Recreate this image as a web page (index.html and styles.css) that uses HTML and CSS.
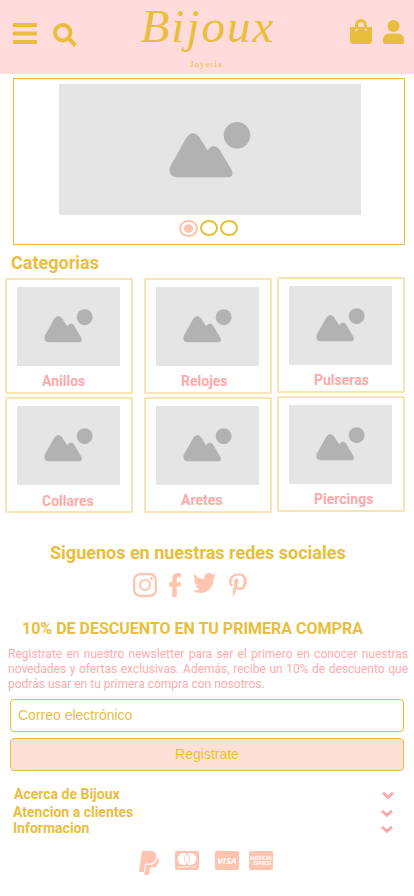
FILE: index.html
```html
<!DOCTYPE html>
<html lang="es">
<head>
<meta charset="utf-8">
<meta name="viewport" content="width=device-width, initial-scale=1">
<title>Bijoux Joyería</title>
<link rel="stylesheet" href="styles.css">
</head>
<body>
<svg width="0" height="0" class="defs">
  <symbol id="picture" viewBox="0 0 82 56">
    <path d="M17.500 15.500Q24 7 30.500 15.500L38.700 28.500Q44.500 20 50.500 27.500L62.700 48Q65.500 55.300 58 55.300H7.500Q-1.500 54 1.200 44.500Z"/>
    <circle cx="68" cy="13.300" r="13.300"/>
  </symbol>
  <symbol id="chevron" viewBox="0 0 14 9"><path d="M2 1.800l5 4.600L12 1.800" fill="none" stroke="#ffa6a6" stroke-width="2.800"/></symbol>
</svg>

<header class="top">
  <svg class="menu" viewBox="0 0 24 22"><path d="M0 0h24v4H0zM0 8.500h24v4H0zM0 17h24v4H0z"/></svg>
  <svg class="search" viewBox="0 0 24 24"><circle cx="9.700" cy="9.700" r="7.700"/><path d="M15.500 15.500l7 7"/></svg>
  <div class="brand"><span class="name">Bijoux</span><span class="sub">Joyería.</span></div>
  <svg class="bag" viewBox="0 0 22 25"><path fill-rule="evenodd" d="M0 8h5V6a6 6 0 0 1 12 0v2h5v13.500a3.500 3.500 0 0 1-3.500 3.500h-15A3.500 3.500 0 0 1 0 21.500zM8 8h6V6.300a3 3 0 0 0-6 0zM6.500 9.700a1.200 1.200 0 1 0 .01 0zM15.800 9.700a1.200 1.200 0 1 0 .01 0z"/></svg>
  <svg class="user" viewBox="0 0 21 24"><circle cx="10.500" cy="6" r="6"/><path d="M6 13.500h9a6 6 0 0 1 6 6V22a2 2 0 0 1-2 2H2a2 2 0 0 1-2-2v-2.500a6 6 0 0 1 6-6z"/></svg>
</header>

<main>
  <section class="hero">
    <div class="slide"><svg><use href="#picture"/></svg></div>
    <div class="dots"><span class="dot on"></span><span class="dot"></span><span class="dot"></span></div>
  </section>

  <h2 class="heading">Categorias</h2>
  <section class="categories">
    <div class="column">
      <article class="card"><div class="thumb"><svg><use href="#picture"/></svg></div><h3>Anillos</h3></article>
      <article class="card"><div class="thumb"><svg><use href="#picture"/></svg></div><h3 class="low">Collares</h3></article>
    </div>
    <div class="column">
      <article class="card"><div class="thumb"><svg><use href="#picture"/></svg></div><h3>Relojes</h3></article>
      <article class="card"><div class="thumb"><svg><use href="#picture"/></svg></div><h3>Aretes</h3></article>
    </div>
    <div class="column last">
      <article class="card"><div class="thumb"><svg><use href="#picture"/></svg></div><h3>Pulseras</h3></article>
      <article class="card"><div class="thumb"><svg><use href="#picture"/></svg></div><h3>Piercings</h3></article>
    </div>
  </section>

  <section class="follow">
    <h2>Siguenos en nuestras redes sociales</h2>
    <div class="social">
      <svg class="ig" viewBox="0 0 24 24"><rect x="1.100" y="1.100" width="21.800" height="21.800" rx="6"/><circle cx="12" cy="12" r="5"/><circle class="solid" cx="18.400" cy="5.600" r="1.500"/></svg>
      <svg class="fb" viewBox="0 0 12 24"><path d="M12 .1v4H9.800C8 4.100 7.800 5 7.800 6.300V9.300H12l-.5 4.300H7.800V24H3.200V13.600H0V9.300h3.200V6C3.200 2 5.500 0 9 0z"/></svg>
      <svg class="tw" viewBox="1.54 4 20.92 17" preserveAspectRatio="none"><path d="M22.460 6c-.77.35-1.600.58-2.460.69.88-.53 1.560-1.370 1.880-2.380-.83.5-1.750.85-2.720 1.050C18.370 4.500 17.260 4 16 4c-2.350 0-4.270 1.920-4.270 4.290 0 .34.040.67.110.98C8.280 9.090 5.110 7.380 3 4.790c-.37.63-.58 1.370-.58 2.150 0 1.490.75 2.810 1.910 3.560-.71 0-1.370-.2-1.950-.5v.03c0 2.080 1.480 3.820 3.440 4.210a4.220 4.220 0 0 1-1.930.07 4.280 4.280 0 0 0 4 2.980 8.520 8.520 0 0 1-5.330 1.840c-.34 0-.68-.02-1.020-.06C3.440 20.290 5.700 21 8.120 21 16 21 20.330 14.460 20.330 8.790c0-.19 0-.37-.01-.56.84-.6 1.560-1.360 2.140-2.230z"/></svg>
      <svg class="pin" viewBox="0 0 384 512" preserveAspectRatio="none"><path d="M204 6.500C101.400 6.500 0 74.900 0 185.600 0 256 39.600 296 63.600 296c9.900 0 15.600-27.600 15.600-35.400 0-9.300-23.700-29.100-23.700-67.800 0-80.400 61.200-137.400 140.400-137.400 68.100 0 118.500 38.700 118.500 109.800 0 53.100-21.300 152.700-90.300 152.700-24.900 0-46.200-18-46.200-43.800 0-37.800 26.400-74.400 26.400-113.400 0-66.200-93.900-54.200-93.900 25.800 0 16.800 2.100 35.400 9.600 50.700-13.800 59.400-42 147.900-42 209.100 0 18.900 2.700 37.500 4.500 56.400 3.400 3.800 1.700 3.400 6.900 1.500 50.400-69 48.600-82.500 71.400-172.800 12.300 23.400 44.100 36 69.300 36 106.200 0 153.900-103.500 153.900-196.800C384 71.300 298.200 6.500 204 6.500z"/></svg>
    </div>
  </section>

  <section class="newsletter">
    <h2>10% DE DESCUENTO EN TU PRIMERA COMPRA</h2>
    <p>Registrate en nuestro newsletter para ser el primero en conocer nuestras novedades y ofertas exclusivas. Además, recibe un 10% de descuento que podrás usar en tu primera compra con nosotros.</p>
    <form>
      <input type="email" placeholder="Correo electrónico">
      <button type="button">Registrate</button>
    </form>
  </section>
</main>

<footer>
  <ul class="links">
    <li class="first"><span>Acerca de Bijoux</span><svg><use href="#chevron"/></svg></li>
    <li class="second"><span>Atencion a clientes</span><svg><use href="#chevron"/></svg></li>
    <li><span>Informacion</span><svg><use href="#chevron"/></svg></li>
  </ul>
  <div class="payments">
    <svg class="paypal" viewBox="0 0 20 24"><path d="M3.400 0h8.200c3.800 0 6.200 2 5.600 5.900-.8 4.600-3.700 6.700-7.800 6.700H7.300c-1 0-1.300.5-1.500 1.300L4.700 21H0L3 .5z"/><path d="M18.400 6.200c1.200 1 1.800 2.600 1.400 4.600-.8 4-3.300 5.800-6.900 5.800h-1.100c-.7 0-.9.500-1 1.100l-1 5.600-.3.700H5.300l1.500-9.200c.1-.7.500-1 1.200-1h2.100c4.600 0 7.600-2.500 8.300-7.600z"/></svg>
    <svg class="pay mc" viewBox="0 0 24 19"><rect width="24" height="19" rx="2"/><circle cx="8.700" cy="8" r="6" fill="#fff"/><circle cx="15.300" cy="8" r="6" fill="#fff"/><path d="M12 3a6 6 0 0 1 0 10a6 6 0 0 1 0-10z" fill="#fff" stroke="#ffc4af" stroke-width=".9"/><text x="3" y="17.200" textLength="18" font-size="3.500">mastercard</text></svg>
    <svg class="pay visa" viewBox="0 0 24 19"><rect width="24" height="19" rx="2"/><text x="2.300" y="12.800" textLength="19.500" lengthAdjust="spacingAndGlyphs" font-size="9.500" font-weight="700" font-style="italic">VISA</text></svg>
    <svg class="pay amex" viewBox="0 0 24 19"><rect width="24" height="19" rx="2"/><text x="1" y="8.500" textLength="21.500" lengthAdjust="spacingAndGlyphs" font-size="4.800" font-weight="700">AMERICAN</text><text x="4.500" y="14" textLength="18" lengthAdjust="spacingAndGlyphs" font-size="4.800" font-weight="700">EXPRESS</text></svg>
  </div>
</footer>
</body>
</html>
```
FILE: styles.css
```css
* { box-sizing: border-box; margin: 0; padding: 0; }
body { width: 414px; height: 896px; overflow: hidden; background: #fff; font-family: Roboto, sans-serif; color: #e9be3d; }
svg { display: block; flex: none; }
.defs { position: absolute; }

.top { display: flex; align-items: flex-start; height: 74px; padding-left: 13px; background: #ffdcdb; fill: #e9be3f; }
.menu { width: 24px; height: 22px; margin-top: 23px; }
.search { width: 24px; height: 24px; margin: 23px 0 0 16px; fill: none; stroke: #e9be3f; stroke-width: 4; }
.brand { display: flex; flex-direction: column; align-items: center; width: 136px; margin-left: 63px; }
.name { height: 59px; font: italic 47px/53px "Liberation Serif", serif; letter-spacing: 2px; white-space: nowrap; }
.sub { font: 9px/11px "Liberation Serif", serif; letter-spacing: 1px; }
.bag { width: 22px; height: 25px; margin: 19px 0 0 74px; }
.user { width: 21px; height: 24px; margin: 20px 0 0 11px; }

.hero { width: 392px; height: 167px; margin: 4px 0 0 13px; padding: 5px 0 0 45px; border: 1px solid #e9be3d; }
.slide { width: 302px; height: 131px; padding: 38px 0 0 110px; background: #e5e5e5; }
.slide svg { width: 82px; height: 56px; fill: #b2b2b2; }
.dots { display: flex; gap: 2px; padding: 5px 0 0 120px; }
.dot { width: 18px; height: 16px; border: 2px solid #e9be3d; border-radius: 50%; }
.dot.on { width: 19px; height: 17px; border-color: #ffc4af; background: radial-gradient(ellipse 5px 4.500px, #ffc4af 88%, #fff 100%); }

.heading { margin: 8px 0 0 11px; font-size: 18px; line-height: 20px; font-weight: 700; }
.categories { display: flex; margin: 5px 0 0 5px; }
.column { display: flex; flex-direction: column; gap: 3px; width: 128px; margin-right: 11px; }
.column.last { margin: -1px 0 0 -6px; }
.card { height: 116px; padding: 7px 0 0 10px; border: 2px solid #f6e5b1; border-radius: 2px; }
.thumb { width: 103px; height: 79px; padding: 22px 0 0 27px; background: #e5e5e5; }
.thumb svg { width: 49px; height: 34px; fill: #b2b2b2; }
.card h3 { margin: 7px 0 0 25px; font-size: 14px; line-height: 16px; font-weight: 700; color: #ffa8a9; }
.card h3.low { margin-top: 8px; }

.follow { padding: 30px 0 0 50px; }
.follow h2 { font-size: 18px; line-height: 20px; font-weight: 700; white-space: nowrap; }
.social { display: flex; align-items: flex-start; padding: 10px 0 0 83px; fill: #ffc4af; }
.ig { width: 24px; height: 24px; fill: none; stroke: #ffc4af; stroke-width: 2.200; }
.ig .solid { fill: #ffc4af; stroke: none; }
.fb { width: 12px; height: 24px; margin-left: 12px; }
.tw { width: 23px; height: 20px; margin-left: 12px; }
.pin { width: 18px; height: 24px; margin-left: 13px; }

.newsletter { padding: 22px 6px 0 8px; }
.newsletter h2 { margin-left: 14px; font-size: 16px; line-height: 20px; font-weight: 700; white-space: nowrap; }
.newsletter p { margin-top: 8px; font-size: 12px; line-height: 15px; text-align: justify; color: #ffabac; }
form { display: flex; flex-direction: column; gap: 6px; width: 394px; margin: 7px 0 0 2px; }
input, button { height: 33px; border: 1px solid #e9be3d; border-radius: 4px; font: 14px "Liberation Sans", sans-serif; color: #e9be3d; }
input { padding: 0 7px 2px; background: #fff; }
input::placeholder { color: #e9be3d; opacity: 1; }
button { padding-bottom: 2px; background: #ffe0d7; }

.links { list-style: none; padding: 15px 0 0 13px; font-size: 14px; font-weight: 700; line-height: 16px; }
.links li { display: flex; width: 381px; justify-content: space-between; }
.links svg { width: 14px; height: 9px; margin-top: 5px; }
.links .first { margin: 0 0 2px 1px; }
.payments { display: flex; align-items: flex-start; padding: 15px 0 0 139px; fill: #ffc4af; }
.paypal { width: 20px; height: 24px; }
.pay { width: 24px; height: 19px; margin-left: 16px; }
.pay.amex { margin-left: 10px; }
.pay text { fill: #fff; font-family: "Open Sans", sans-serif; }
```
